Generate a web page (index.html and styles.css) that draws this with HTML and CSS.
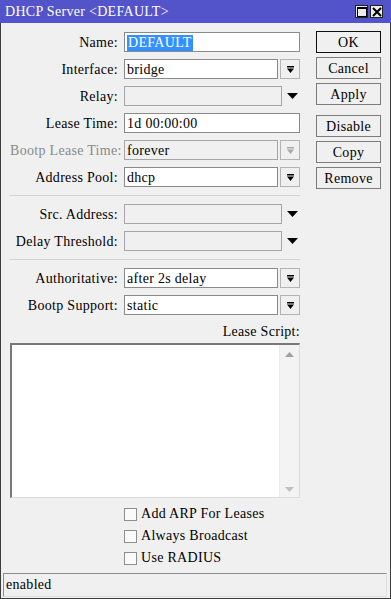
FILE: index.html
```html
<!DOCTYPE html>
<html>
<head>
<meta charset="utf-8">
<link rel="stylesheet" href="styles.css">
</head>
<body>
<div class="window">
  <div class="titlebar">
    <span class="title">DHCP Server &lt;DEFAULT&gt;</span>
    <div class="tbtns">
      <span class="tbtn"><svg width="10" height="10" viewBox="0 0 10 10"><rect x="0.5" y="0.5" width="9" height="9" fill="none" stroke="#000"/><rect x="0" y="0" width="10" height="2" fill="#000"/></svg></span>
      <span class="tbtn"><svg width="10" height="10" viewBox="0 0 10 10"><path d="M1 1L9 9M9 1L1 9" stroke="#000" stroke-width="2"/></svg></span>
    </div>
  </div>
  <div class="main">
    <div class="form">
      <div class="group">
        <div class="row"><label class="lbl">Name:</label><div class="field"><div class="input"><span class="sel">DEFAULT</span></div></div></div>
        <div class="row"><label class="lbl">Interface:</label><div class="field"><div class="input">bridge</div><span class="ddbtn"><svg width="7" height="7" viewBox="0 0 7 7"><rect x="0" y="0" width="7" height="1.5"/><path d="M0 2.5H7L3.5 7Z"/></svg></span></div></div>
        <div class="row"><label class="lbl">Relay:</label><div class="field"><div class="input off"></div><span class="arrow"><svg width="11" height="6" viewBox="0 0 11 6"><path d="M0 0H11L5.5 6Z"/></svg></span></div></div>
        <div class="row"><label class="lbl">Lease Time:</label><div class="field"><div class="input">1d 00:00:00</div></div></div>
        <div class="row"><label class="lbl dis">Bootp Lease Time:</label><div class="field"><div class="input off">forever</div><span class="ddbtn disbtn"><svg width="7" height="7" viewBox="0 0 7 7"><rect x="0" y="0" width="7" height="1.5"/><path d="M0 2.5H7L3.5 7Z"/></svg></span></div></div>
        <div class="row"><label class="lbl">Address Pool:</label><div class="field"><div class="input">dhcp</div><span class="ddbtn"><svg width="7" height="7" viewBox="0 0 7 7"><rect x="0" y="0" width="7" height="1.5"/><path d="M0 2.5H7L3.5 7Z"/></svg></span></div></div>
      </div>
      <div class="sep"></div>
      <div class="group">
        <div class="row"><label class="lbl">Src. Address:</label><div class="field"><div class="input off"></div><span class="arrow"><svg width="11" height="6" viewBox="0 0 11 6"><path d="M0 0H11L5.5 6Z"/></svg></span></div></div>
        <div class="row"><label class="lbl">Delay Threshold:</label><div class="field"><div class="input off"></div><span class="arrow"><svg width="11" height="6" viewBox="0 0 11 6"><path d="M0 0H11L5.5 6Z"/></svg></span></div></div>
      </div>
      <div class="sep"></div>
      <div class="group">
        <div class="row"><label class="lbl">Authoritative:</label><div class="field"><div class="input">after 2s delay</div><span class="ddbtn"><svg width="7" height="7" viewBox="0 0 7 7"><rect x="0" y="0" width="7" height="1.5"/><path d="M0 2.5H7L3.5 7Z"/></svg></span></div></div>
        <div class="row"><label class="lbl">Bootp Support:</label><div class="field"><div class="input">static</div><span class="ddbtn"><svg width="7" height="7" viewBox="0 0 7 7"><rect x="0" y="0" width="7" height="1.5"/><path d="M0 2.5H7L3.5 7Z"/></svg></span></div></div>
      </div>
      <div class="scriptlbl">Lease Script:</div>
      <div class="textarea">
        <div class="tacontent"></div>
        <div class="scroll">
          <svg width="9" height="5" viewBox="0 0 9 5"><path d="M0 5H9L4.5 0Z" fill="#a0a0a0"/></svg>
          <svg width="9" height="5" viewBox="0 0 9 5"><path d="M0 0H9L4.5 5Z" fill="#c0c0c0"/></svg>
        </div>
      </div>
      <div class="checks">
        <div class="check"><span class="box"></span>Add ARP For Leases</div>
        <div class="check"><span class="box"></span>Always Broadcast</div>
        <div class="check"><span class="box"></span>Use RADIUS</div>
      </div>
    </div>
    <div class="buttons">
      <div class="bgroup">
        <div class="btn default">OK</div>
        <div class="btn">Cancel</div>
        <div class="btn">Apply</div>
      </div>
      <div class="bgroup">
        <div class="btn">Disable</div>
        <div class="btn">Copy</div>
        <div class="btn">Remove</div>
      </div>
    </div>
  </div>
  <div class="status">enabled</div>
</div>
</body>
</html>
```

FILE: styles.css
```css
* { box-sizing: border-box; }
html, body { margin: 0; padding: 0; }
body {
  font-family: "Liberation Serif", "Times New Roman", serif;
  font-size: 14px;
  letter-spacing: 0.3px;
  color: #000;
  background: #f0f0f0;
}
.window {
  width: 391px;
  height: 599px;
  display: flex;
  flex-direction: column;
  background: #f0f0f0;
  border-left: 1px solid #3c3c3c;
  border-right: 1px solid #3c3c3c;
  border-bottom: 1px solid #3c3c3c;
}
.titlebar {
  height: 23px;
  background: #5353ca;
  color: #fff;
  display: flex;
  align-items: center;
  justify-content: space-between;
  padding: 0 8px 0 5px;
  margin: 0 -1px;
}
.title { font-size: 14px; line-height: 16px; }
.tbtns { display: flex; gap: 2px; }
.tbtn {
  width: 13px;
  height: 13px;
  background: #ececec;
  border: 1px solid #202020;
  display: flex;
  align-items: center;
  justify-content: center;
}
.main {
  flex: 1;
  display: flex;
  padding: 9px 0 0 9px;
}
.form {
  width: 290px;
  display: flex;
  flex-direction: column;
}
.group { display: flex; flex-direction: column; gap: 7px; }
.row { display: flex; align-items: center; height: 20px; gap: 6px; }
.lbl { width: 108px; text-align: right; white-space: nowrap; line-height: 16px; padding-top: 1px; }
.lbl.dis { color: #8a8a8a; }
.field { flex: 1; display: flex; align-items: stretch; height: 20px; gap: 2px; }
.input {
  flex: 1;
  background: #fff;
  border: 1px solid #8a8a8a;
  padding: 0 2px;
  line-height: 19px;
  white-space: nowrap;
  overflow: hidden;
}
.input.off { background: #f0f0f0; border-color: #a6a6a6; }
.sel { background: #3390ff; color: #fff; display: inline-block; line-height: 16px; padding: 0 1px; }
.ddbtn {
  width: 20px;
  border: 1px solid #b4b4b4;
  background: #f0f0f0;
  display: flex;
  align-items: center;
  justify-content: center;
}
.ddbtn svg { fill: #000; }
.ddbtn.disbtn svg { fill: #a8a8a8; }
.arrow {
  width: 16px;
  display: flex;
  align-items: center;
  justify-content: center;
}
.arrow svg { fill: #000; }
.sep {
  height: 1px;
  background: #d2d2d2;
  margin: 8px 0;
}
.scriptlbl {
  text-align: right;
  line-height: 16px;
  margin-top: 9px;
}
.textarea {
  margin-top: 3px;
  height: 155px;
  display: flex;
  border-top: 2px solid #787878;
  border-left: 2px solid #787878;
  border-right: 1px solid #dcdcdc;
  border-bottom: 1px solid #dcdcdc;
  background: #fff;
}
.tacontent { flex: 1; }
.scroll {
  width: 20px;
  background: #f3f3f3;
  border-left: 1px solid #ececec;
  display: flex;
  flex-direction: column;
  justify-content: space-between;
  align-items: center;
  padding: 7px 0 5px;
}
.checks {
  margin-top: 5px;
  display: flex;
  flex-direction: column;
  padding-left: 114px;
}
.check {
  height: 22px;
  display: flex;
  align-items: center;
  gap: 4px;
  line-height: 16px;
}
.box {
  width: 13px;
  height: 13px;
  border: 1px solid #8e8e8e;
  background: #fafafa;
}
.buttons {
  margin-left: 16px;
  margin-top: -1px;
  width: 65px;
  display: flex;
  flex-direction: column;
  gap: 10px;
}
.bgroup { display: flex; flex-direction: column; gap: 4px; }
.btn {
  height: 22px;
  border: 1px solid #7c7c7c;
  background: #f0f0f0;
  text-align: center;
  line-height: 21px;
}
.btn.default { border: 1px solid #101010; box-shadow: inset 0 0 0 1px #f0f0f0; }
.status {
  height: 24px;
  margin: 0 3px 1px 2px;
  border: 1px solid #8c8c8c;
  border-right-color: #e0e0e0;
  border-bottom-color: #e0e0e0;
  padding-left: 2px;
  line-height: 22px;
}
```
